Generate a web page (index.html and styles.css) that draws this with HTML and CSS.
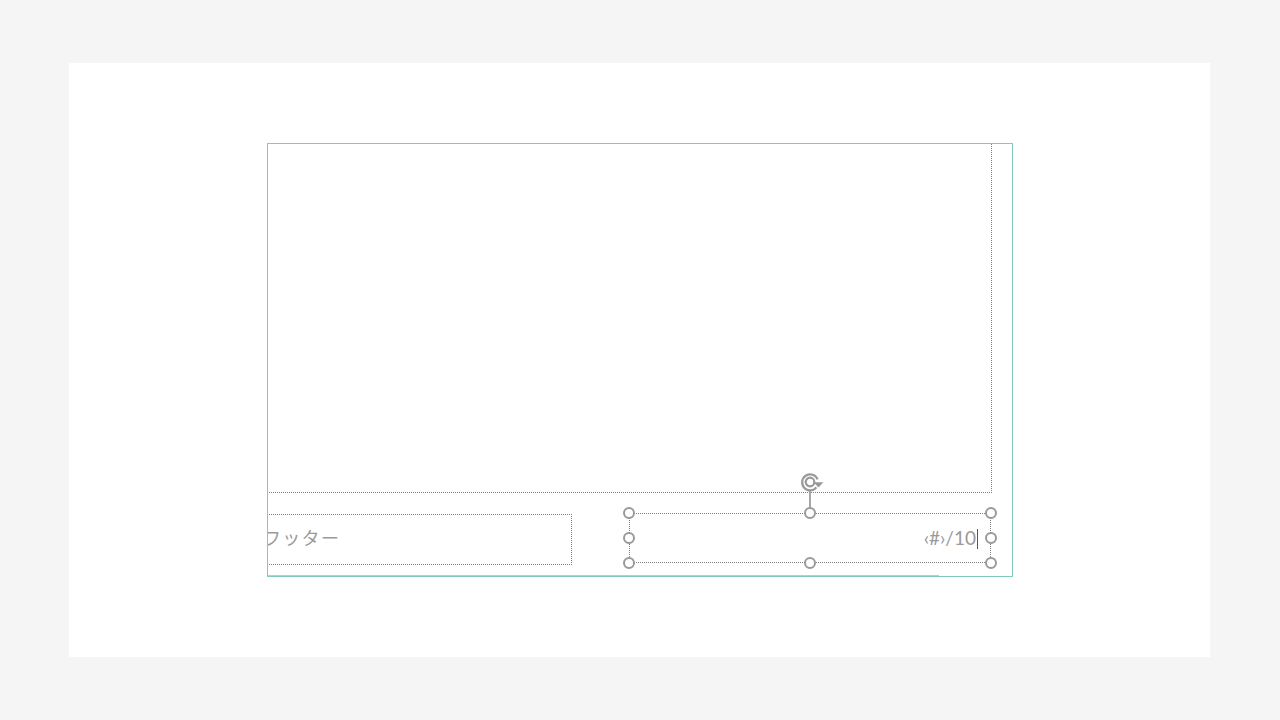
FILE: index.html
```html
<!DOCTYPE html>
<html lang="ja">
	<head>
		<meta charset="utf-8" />
		<title>スライドマスター</title>
		<link rel="stylesheet" href="styles.css">
	</head>

	<body>
		<div class="stage">
			<div class="slide">
				<div class="ph ph-body"></div>
				<div class="ph ph-footer"><span class="ph-text">フッター</span></div>
				<div class="ph ph-num selected">
					<span class="ph-text">‹#›/10<i class="caret"></i></span>
					<span class="rot-line"></span>
					<svg class="rot" width="26" height="22" viewBox="0 0 26 22">
						<path d="M18.6 8.4 A8 8 0 1 0 17.4 16.4" fill="none" stroke="#999" stroke-width="2.2" />
						<circle cx="11" cy="11" r="4.3" fill="none" stroke="#999" stroke-width="2.2" />
						<path d="M14.6 11.2 L24.4 11.2 L19.5 16.4 Z" fill="#999" />
					</svg>
					<span class="h tl"></span><span class="h tc"></span><span class="h tr"></span>
					<span class="h ml"></span><span class="h mr"></span>
					<span class="h bl"></span><span class="h bc"></span><span class="h br"></span>
				</div>
			</div>
		</div>
	</body>
</html>
```

FILE: styles.css
```css
html,
body {
	margin: 0;
	padding: 0;
	background: #f5f5f5;
	font-family: Lato, "Noto Sans CJK JP", sans-serif;
}
.stage {
	margin: 63px 70px 0 69px;
	width: 1141px;
	height: 594px;
	background: #fff;
	padding: 80px 0 0 198px;
	box-sizing: border-box;
}
.slide {
	position: relative;
	width: 746px;
	height: 434px;
	border: 1px solid #7fcabd;
	box-sizing: border-box;
	overflow: hidden;
}
.slide::after {
	content: "";
	position: absolute;
	left: 0;
	bottom: 0;
	width: 671px;
	height: 1px;
	background: #b9cfcb;
}
.ph {
	position: absolute;
	border: 1px dotted #808080;
	box-sizing: border-box;
}
.ph-body {
	left: -20px;
	top: -10px;
	width: 744px;
	height: 359px;
}
.ph-footer {
	left: -20px;
	top: 370px;
	width: 324px;
	height: 51px;
	display: flex;
	align-items: center;
	padding-left: 14px;
	padding-bottom: 5px;
}
.ph-text {
	font-size: 18px;
	color: #9a9a9a;
}
.ph-footer .ph-text {
	font-size: 18px;
	letter-spacing: 1.3px;
}
.ph-num {
	left: 361px;
	top: 369px;
	width: 362px;
	height: 50px;
	display: flex;
	align-items: center;
	justify-content: flex-end;
	padding-right: 12px;
}
.ph-num .ph-text {
	font-size: 19px;
	padding-bottom: 1px;
}
.caret {
	display: inline-block;
	width: 1px;
	height: 20px;
	background: #555;
	vertical-align: -4px;
	margin-left: 1px;
}
.h {
	position: absolute;
	width: 12px;
	height: 12px;
	border: 2px solid #999;
	border-radius: 50%;
	background: #fff;
	box-sizing: border-box;
}
.tl { left: -7px; top: -7px; }
.tc { left: 174px; top: -7px; }
.tr { right: -7px; top: -7px; }
.ml { left: -7px; top: 18px; }
.mr { right: -7px; top: 18px; }
.bl { left: -7px; bottom: -7px; }
.bc { left: 174px; bottom: -7px; }
.br { right: -7px; bottom: -7px; }
.rot-line {
	position: absolute;
	left: 179px;
	top: -24px;
	width: 2px;
	height: 18px;
	background: #a6a6a6;
}
.rot {
	position: absolute;
	left: 169px;
	top: -43px;
}
```
